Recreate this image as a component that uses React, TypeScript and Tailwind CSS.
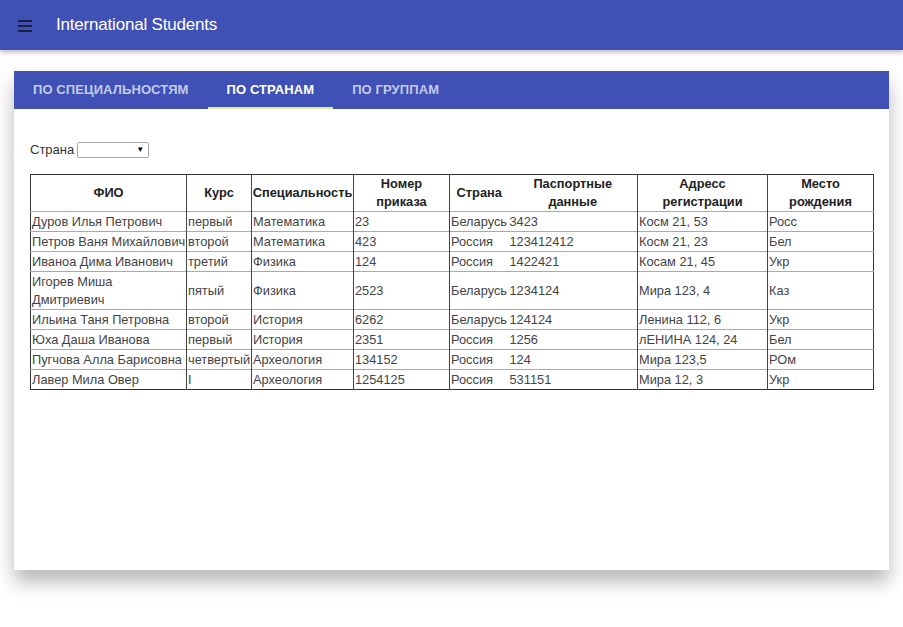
import React from "react";

const rows = [
  ["Дуров Илья Петрович", "первый", "Математика", "23", "Беларусь", "3423", "Косм 21, 53", "Росс"],
  ["Петров Ваня Михайлович", "второй", "Математика", "423", "Россия", "123412412", "Косм 21, 23", "Бел"],
  ["Иваноа Дима Иванович", "третий", "Физика", "124", "Россия", "1422421", "Косам 21, 45", "Укр"],
  ["Игорев Миша|Дмитриевич", "пятый", "Физика", "2523", "Беларусь", "1234124", "Мира 123, 4", "Каз"],
  ["Ильина Таня Петровна", "второй", "История", "6262", "Беларусь", "124124", "Ленина 112, 6", "Укр"],
  ["Юха Даша Иванова", "первый", "История", "2351", "Россия", "1256", "лЕНИНА 124, 24", "Бел"],
  ["Пугчова Алла Барисовна", "четвертый", "Археология", "134152", "Россия", "124", "Мира 123,5", "РОм"],
  ["Лавер Мила Овер", "I", "Археология", "1254125", "Россия", "531151", "Мира 12, 3", "Укр"],
];

const widths = ["w-[156px]", "w-[65px]", "w-[102px]", "w-[96px]", "w-[59px]", "w-[129px]", "w-[130px]", "w-[106px]"];

// the country and passport columns share no divider in the original
function cellBorder(i: number) {
  if (i === 0 || i === 5) return "";
  return "border-l border-l-[#444]";
}

function Cell({ text }: { text: string }) {
  const parts = text.split("|");
  return (
    <>
      {parts.map((p, i) => (
        <React.Fragment key={i}>
          {i > 0 && <br />}
          {p}
        </React.Fragment>
      ))}
    </>
  );
}

export default function App() {
  return (
    <div className="min-h-[627px] bg-white font-['Liberation_Sans',Arial,sans-serif] text-[#333]">
      <header className="h-[50px] bg-[#3f51b5] flex items-center shadow-[0_2px_5px_rgba(0,0,0,0.3)] relative z-10">
        <div className="ml-[18px] w-[14px] flex flex-col gap-[3px] mt-[2px]">
          <span className="block h-[2px] bg-[#1c1f3f]" />
          <span className="block h-[2px] bg-[#1c1f3f]" />
          <span className="block h-[2px] bg-[#1c1f3f]" />
        </div>
        <h1 className="ml-[24px] text-white text-[17px] tracking-[-0.2px]">International Students</h1>
      </header>

      <main className="px-[14px] pt-[21px]">
        <div className="bg-white h-[499px] shadow-[0_12px_18px_rgba(0,0,0,0.28)]">
          <nav className="h-[38px] bg-[#3f51b5] flex text-[13px] font-bold tracking-[0.1px]">
            <div className="px-[19px] flex items-center text-[#c5cae9]">ПО СПЕЦИАЛЬНОСТЯМ</div>
            <div className="px-[19px] flex items-center text-white relative">
              ПО СТРАНАМ
              <span className="absolute left-0 right-0 bottom-0 h-[2px] bg-[#e4e89a]" />
            </div>
            <div className="px-[19px] flex items-center text-[#c5cae9]">ПО ГРУППАМ</div>
          </nav>

          <div className="px-[16px] pt-[33px]">
            <div className="flex items-center gap-[3px] text-[13px] h-[16px]">
              <span>Страна</span>
              <div className="w-[72px] h-[16px] border border-[#a9a9a9] rounded-[2px] bg-white flex items-center justify-end pr-[4px]">
                <span className="text-[8px] text-black leading-none">▼</span>
              </div>
            </div>

            <table className="mt-[16px] w-[843px] table-fixed border-collapse border border-[#333] text-[12.8px] leading-[18px]">
              <thead>
                <tr className="h-[37px] text-[#222]">
                  <th className={`${widths[0]} font-bold text-center`}>ФИО</th>
                  <th className={`${widths[1]} ${cellBorder(1)} font-bold text-center`}>Курс</th>
                  <th className={`${widths[2]} ${cellBorder(2)} font-bold text-center`}>Специальность</th>
                  <th className={`${widths[3]} ${cellBorder(3)} font-bold text-center`}>Номер<br />приказа</th>
                  <th className={`${widths[4]} ${cellBorder(4)} font-bold text-center`}>Страна</th>
                  <th className={`${widths[5]} font-bold text-center`}>Паспортные<br />данные</th>
                  <th className={`${widths[6]} ${cellBorder(6)} font-bold text-center`}>Адресс<br />регистрации</th>
                  <th className={`${widths[7]} ${cellBorder(7)} font-bold text-center`}>Место<br />рождения</th>
                </tr>
              </thead>
              <tbody>
                {rows.map((r, ri) => (
                  <tr key={ri} className="border-t border-t-[#aaa]">
                    {r.map((c, ci) => (
                      <td
                        key={ci}
                        className={`${cellBorder(ci)} align-middle whitespace-nowrap overflow-hidden px-[1px] pt-[1px] pb-0 text-left text-[#444]`}
                      >
                        <Cell text={c} />
                      </td>
                    ))}
                  </tr>
                ))}
              </tbody>
            </table>
          </div>
        </div>
      </main>
    </div>
  );
}
